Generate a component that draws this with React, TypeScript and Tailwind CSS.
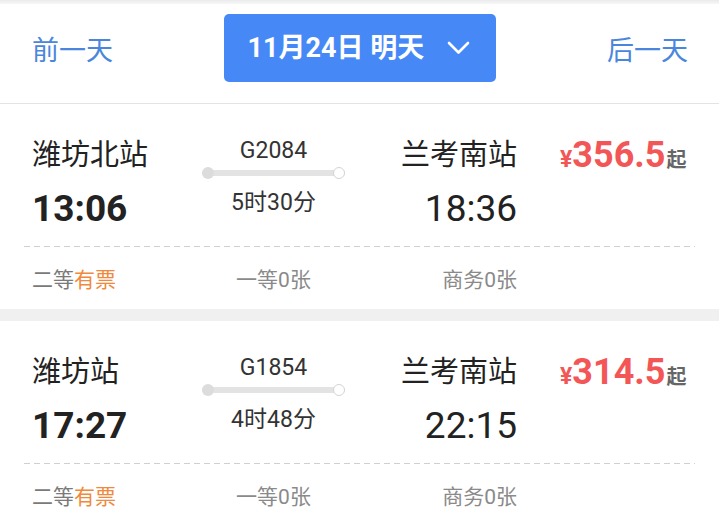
import React from "react";

type Train = {
  from: string;
  to: string;
  no: string;
  dep: string;
  arr: string;
  dur: string;
  price: string;
};

const trains: Train[] = [
  { from: "潍坊北站", to: "兰考南站", no: "G2084", dep: "13:06", arr: "18:36", dur: "5时30分", price: "356.5" },
  { from: "潍坊站", to: "兰考南站", no: "G1854", dep: "17:27", arr: "22:15", dur: "4时48分", price: "314.5" },
];

function Card({ t }: { t: Train }) {
  return (
    <div className="bg-white h-[205px] px-[24px]">
      <div className="flex h-[142px]">
        <div className="w-[178px] pl-[8px]">
          <div className="mt-[33px] h-[36px] leading-[36px] text-[29px] text-[#222]">{t.from}</div>
          <div className="h-[72px] leading-[72px] text-[37px] font-bold text-[#222]">{t.dep}</div>
        </div>
        <div className="w-[143px] flex flex-col items-center">
          <div className="mt-[35px] h-[24px] leading-[24px] text-[23px] text-[#333]">{t.no}</div>
          <div className="mt-[4px] h-[12px] w-full relative flex items-center">
            <div className="h-[6px] w-full bg-[#e3e3e3] rounded-full" />
            <div className="absolute left-0 top-0 w-[12px] h-[12px] rounded-full bg-[#dcdcdc]" />
            <div className="absolute right-0 top-0 w-[12px] h-[12px] rounded-full bg-white border-[1.5px] border-[#d4d4d4]" />
          </div>
          <div className="mt-[12px] h-[24px] leading-[24px] text-[23px] text-[#333]">{t.dur}</div>
        </div>
        <div className="w-[172px] text-right">
          <div className="mt-[33px] h-[36px] leading-[36px] text-[29px] text-[#222]">{t.to}</div>
          <div className="h-[72px] leading-[72px] text-[37px] text-[#222]">{t.arr}</div>
        </div>
        <div className="flex-1 pl-[43px]">
          <div className="mt-[31px] h-[40px] flex items-baseline whitespace-nowrap">
            <span className="text-[23px] font-bold text-[#f25656]">¥</span>
            <span className="text-[36px] font-bold text-[#f25656] leading-[40px]">{t.price}</span>
            <span className="text-[20px] font-bold text-[#666] ml-[1px]">起</span>
          </div>
        </div>
      </div>
      <div className="h-px bg-[linear-gradient(to_right,#d0d0d0_60%,transparent_0)] bg-[length:10px_1px]" />
      <div className="flex pt-[21px] h-[24px] leading-[24px] text-[21px] text-[#7a7a7a] box-content">
        <div className="w-[178px] pl-[8px]">
          二等<span className="text-[#f0893b]">有票</span>
        </div>
        <div className="w-[143px] text-center text-[#8a8a8a]">一等0张</div>
        <div className="w-[172px] text-right text-[#8a8a8a]">商务0张</div>
      </div>
    </div>
  );
}

export default function App() {
  return (
    <div
      className="w-[719px] h-[525px] overflow-hidden bg-[#f0f0f0]"
      style={{ fontFamily: "Roboto, 'Noto Sans CJK SC', sans-serif" }}
    >
      <div className="h-[4px] bg-gradient-to-b from-[#ebebeb] to-[#f7f7f7]" />
      <div className="h-[100px] bg-white border-b border-[#e3e3e3] grid grid-cols-[1fr_272px_1fr]">
        <div className="pl-[32px] pt-[31px] leading-[32px] text-[27px] text-[#4a87dc]">前一天</div>
        <div className="mt-[10px] h-[68px] rounded-[5px] bg-[#4689f6] flex items-center pl-[24px] pr-[26px] justify-between">
          <span className="text-white font-bold text-[27px] whitespace-nowrap">11月24日 明天</span>
          <svg width="23" height="14" viewBox="0 0 23 14" fill="none">
            <polyline points="2,2 11.5,11.5 21,2" stroke="white" strokeWidth="2.6" strokeLinecap="round" strokeLinejoin="round" />
          </svg>
        </div>
        <div className="pr-[31px] pt-[31px] leading-[32px] text-right text-[27px] text-[#4a87dc]">后一天</div>
      </div>
      <Card t={trains[0]} />
      <div className="h-[12px]" />
      <Card t={trains[1]} />
    </div>
  );
}
